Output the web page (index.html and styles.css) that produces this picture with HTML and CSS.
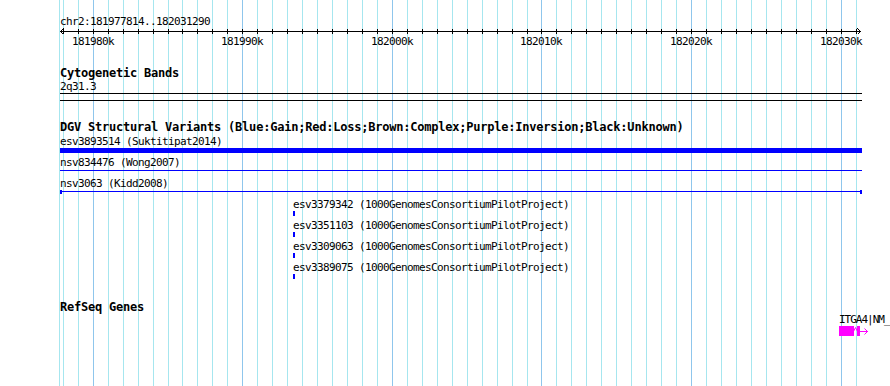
FILE: index.html
```html
<!DOCTYPE html>
<html>
<head>
<meta charset="utf-8">
<title>Genome browser</title>
<link rel="stylesheet" href="styles.css">
</head>
<body>
<div class="canvas">
  <div class="grid">
    <i class="gl" style="left:59px"></i><i class="gl" style="left:63px"></i><i class="gl" style="left:78px"></i><i class="gl major" style="left:93px"></i><i class="gl" style="left:108px"></i><i class="gl" style="left:123px"></i><i class="gl" style="left:138px"></i><i class="gl" style="left:153px"></i><i class="gl" style="left:168px"></i><i class="gl" style="left:182px"></i><i class="gl" style="left:197px"></i><i class="gl" style="left:212px"></i><i class="gl" style="left:227px"></i><i class="gl major" style="left:242px"></i><i class="gl" style="left:257px"></i><i class="gl" style="left:272px"></i><i class="gl" style="left:287px"></i><i class="gl" style="left:302px"></i><i class="gl" style="left:317px"></i><i class="gl" style="left:332px"></i><i class="gl" style="left:347px"></i><i class="gl" style="left:362px"></i><i class="gl" style="left:377px"></i><i class="gl major" style="left:392px"></i><i class="gl" style="left:407px"></i><i class="gl" style="left:422px"></i><i class="gl" style="left:437px"></i><i class="gl" style="left:452px"></i><i class="gl" style="left:467px"></i><i class="gl" style="left:482px"></i><i class="gl" style="left:497px"></i><i class="gl" style="left:512px"></i><i class="gl" style="left:527px"></i><i class="gl major" style="left:541px"></i><i class="gl" style="left:556px"></i><i class="gl" style="left:571px"></i><i class="gl" style="left:586px"></i><i class="gl" style="left:601px"></i><i class="gl" style="left:616px"></i><i class="gl" style="left:631px"></i><i class="gl" style="left:646px"></i><i class="gl" style="left:661px"></i><i class="gl" style="left:676px"></i><i class="gl major" style="left:691px"></i><i class="gl" style="left:706px"></i><i class="gl" style="left:721px"></i><i class="gl" style="left:736px"></i><i class="gl" style="left:751px"></i><i class="gl" style="left:766px"></i><i class="gl" style="left:781px"></i><i class="gl" style="left:796px"></i><i class="gl" style="left:811px"></i><i class="gl" style="left:826px"></i><i class="gl major" style="left:841px"></i><i class="gl" style="left:856px"></i>
  </div>

  <div class="tracks">
    <section class="ruler">
      <div class="sm range">chr2:181977814..182031290</div>
      <svg class="axis" width="802" height="7" viewBox="0 0 802 7">
        <path class="stroke" d="M0 3.5H801M3.5 0.5L0.5 3.5L3.5 6.5M797.5 0.5L800.5 3.5L797.5 6.5"/>
        <path class="stroke" d="M3.5 1v5M18.5 1v5M33.5 1v5M48.5 1v5M63.5 1v5M78.5 1v5M93.5 1v5M108.5 1v5M122.5 1v5M137.5 1v5M152.5 1v5M167.5 1v5M182.5 1v5M197.5 1v5M212.5 1v5M227.5 1v5M242.5 1v5M257.5 1v5M272.5 1v5M287.5 1v5M302.5 1v5M317.5 1v5M332.5 1v5M347.5 1v5M362.5 1v5M377.5 1v5M392.5 1v5M407.5 1v5M422.5 1v5M437.5 1v5M452.5 1v5M467.5 1v5M481.5 1v5M496.5 1v5M511.5 1v5M526.5 1v5M541.5 1v5M556.5 1v5M571.5 1v5M586.5 1v5M601.5 1v5M616.5 1v5M631.5 1v5M646.5 1v5M661.5 1v5M676.5 1v5M691.5 1v5M706.5 1v5M721.5 1v5M736.5 1v5M751.5 1v5M766.5 1v5M781.5 1v5M796.5 1v5"/>
      </svg>
      <div class="sm ticklabels">
        <span class="tl" style="left:12px">181980k</span>
        <span class="tl" style="left:161px">181990k</span>
        <span class="tl" style="left:311px">182000k</span>
        <span class="tl" style="left:460px">182010k</span>
        <span class="tl" style="left:610px">182020k</span>
        <span class="tl" style="left:760px">182030k</span>
      </div>
    </section>

    <section class="track cyto">
      <div class="title">Cytogenetic Bands</div>
      <div class="sm">2q31.3</div>
      <div class="band"></div>
    </section>

    <section class="track dgv">
      <div class="title">DGV Structural Variants (Blue:Gain;Red:Loss;Brown:Complex;Purple:Inversion;Black:Unknown)</div>
      <div class="features">
        <div class="feat">
          <div class="sm">esv3893514 (Suktitipat2014)</div>
          <div class="bar thick"></div>
        </div>
        <div class="feat">
          <div class="sm">nsv834476 (Wong2007)</div>
          <div class="bar line"></div>
        </div>
        <div class="feat">
          <div class="sm">nsv3063 (Kidd2008)</div>
          <div class="bar line capped"></div>
        </div>
        <div class="feat" style="margin-left:233px">
          <div class="sm">esv3379342 (1000GenomesConsortiumPilotProject)</div>
          <div class="bar mark"></div>
        </div>
        <div class="feat" style="margin-left:233px">
          <div class="sm">esv3351103 (1000GenomesConsortiumPilotProject)</div>
          <div class="bar mark"></div>
        </div>
        <div class="feat" style="margin-left:233px">
          <div class="sm">esv3309063 (1000GenomesConsortiumPilotProject)</div>
          <div class="bar mark"></div>
        </div>
        <div class="feat" style="margin-left:233px">
          <div class="sm">esv3389075 (1000GenomesConsortiumPilotProject)</div>
          <div class="bar mark"></div>
        </div>
      </div>
    </section>

    <section class="track refseq">
      <div class="title">RefSeq Genes</div>
      <div class="gene" style="margin-left:779px">
        <div class="sm genelabel">ITGA4|NM_</div>
        <svg class="genesvg" width="40" height="11" viewBox="0 0 40 11">
          <rect x="0" y="0" width="15" height="10" class="fillm"/>
          <path class="strokem" d="M14.5 5.5L16.5 1.5L18.5 5.5"/>
          <rect x="18" y="0" width="3" height="10" class="fillm"/>
          <path class="strokem" d="M21 5.5H29M25.5 2.5L28.5 5.5L25.5 8.5"/>
        </svg>
      </div>
    </section>
  </div>
</div>
</body>
</html>
```

FILE: styles.css
```css
html, body {
  margin: 0;
  padding: 0;
  background: #ffffff;
}

.canvas {
  position: relative;
  width: 890px;
  height: 386px;
  overflow: hidden;
  background: #ffffff;
  font-family: "DejaVu Sans Mono", "Liberation Mono", monospace;
  color: #000;
}

.grid {
  position: absolute;
  inset: 0;
}

.gl {
  position: absolute;
  top: 0;
  bottom: 0;
  width: 1px;
  background: #a6e6ef;
}

.gl.major {
  background: #8fc6ec;
}

.tracks {
  position: relative;
  width: 800px;
  padding-left: 60px;
}

.sm {
  font-size: 11px;
  line-height: 13px;
  height: 13px;
  letter-spacing: -0.62px;
  white-space: nowrap;
}

.title {
  font-size: 12px;
  font-weight: bold;
  line-height: 13px;
  height: 13px;
  letter-spacing: -0.22px;
  white-space: nowrap;
}

/* ruler */
.range {
  padding-top: 15px;
}

.axis {
  display: block;
  shape-rendering: crispEdges;
}

.stroke {
  stroke: #000;
  stroke-width: 1;
  fill: none;
}

.ticklabels {
  position: relative;
}

.tl {
  position: absolute;
  top: 0;
}

/* tracks */
.cyto {
  margin-top: 19px;
}

.band {
  width: 802px;
  height: 6px;
  border-top: 1px solid #000;
  border-bottom: 1px solid #000;
}

.dgv {
  margin-top: 20px;
}

.features {
  display: flex;
  flex-direction: column;
  gap: 3px;
  padding-top: 1px;
}

.bar {
  position: relative;
  height: 5px;
}

.bar.thick {
  width: 802px;
  background: #0000ff;
}

.bar.line {
  width: 802px;
  background: linear-gradient(#0000ff, #0000ff) 0 1px / 100% 1px no-repeat;
}

.bar.capped::before,
.bar.capped::after {
  content: "";
  position: absolute;
  top: 0;
  width: 2px;
  height: 4px;
  background: #0000ff;
}

.bar.capped::before {
  left: 0;
}

.bar.capped::after {
  right: 0;
}

.bar.mark {
  width: 2px;
  background: #0000ff;
}

.refseq {
  margin-top: 22px;
}

.gene {
  margin-top: -1px;
}

.genelabel {
  letter-spacing: -1px;
}

.genesvg {
  display: block;
}

.fillm {
  fill: #ff00ff;
}

.strokem {
  stroke: #ff00ff;
  stroke-width: 1;
  fill: none;
}
```
